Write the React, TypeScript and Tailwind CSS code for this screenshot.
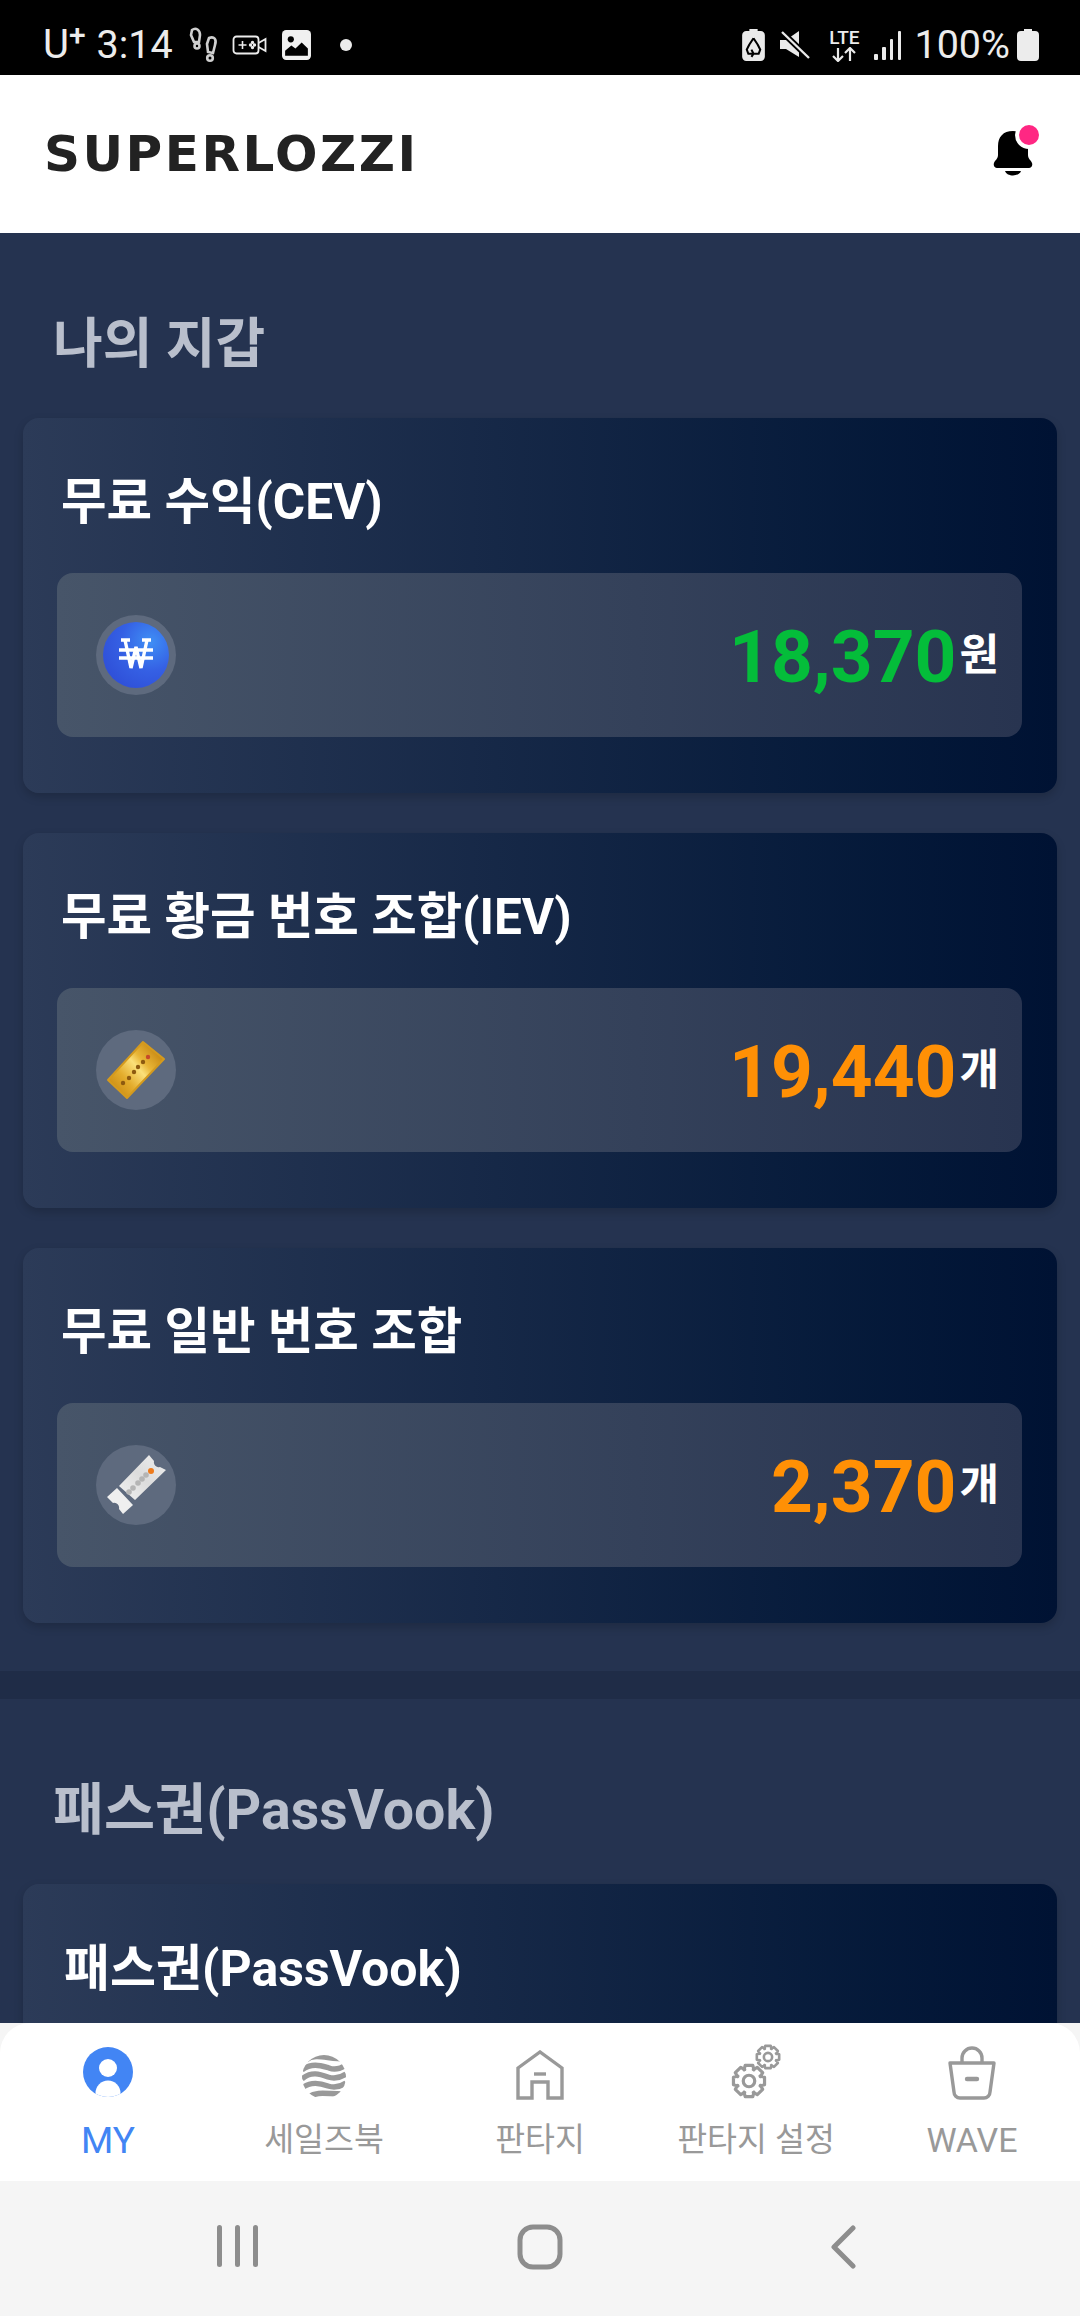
const font = "font-['Roboto','Noto_Sans_CJK_KR',sans-serif]";

function WonCoin() {
  return (
    <div className="w-[80px] h-[80px] rounded-full bg-[#5e6a7e] flex items-center justify-center">
      <svg width="66" height="66" viewBox="0 0 66 66">
        <defs>
          <radialGradient id="coin" cx="0.72" cy="0.3" r="0.8">
            <stop offset="0" stopColor="#3f8ff5" />
            <stop offset="0.55" stopColor="#3560e4" />
            <stop offset="1" stopColor="#2f50d8" />
          </radialGradient>
        </defs>
        <circle cx="33" cy="33" r="33" fill="url(#coin)" />
        <g stroke="#fff" strokeWidth="3.4" fill="none" strokeLinecap="butt" strokeLinejoin="miter">
          <path d="M22 18 L28 46 L33 25 L38 46 L44 18" />
          <path d="M16 28 H50" />
          <path d="M16 36 H50" />
          <path d="M18 18 H27 M39 18 H48" />
        </g>
      </svg>
    </div>
  );
}

function GoldTicket() {
  return (
    <div className="w-[80px] h-[80px] rounded-full bg-[#5e6a7e] flex items-center justify-center">
      <svg width="80" height="80" viewBox="0 0 80 80">
        <defs>
          <linearGradient id="gold" x1="0.1" y1="0.9" x2="0.9" y2="0.2">
            <stop offset="0" stopColor="#c98a12" />
            <stop offset="0.3" stopColor="#e3ac2c" />
            <stop offset="0.58" stopColor="#fbe07a" />
            <stop offset="0.72" stopColor="#e9b637" />
            <stop offset="1" stopColor="#c98a14" />
          </linearGradient>
        </defs>
        <path d="M12 50 L47 12 L68 29 L31 68 Z" fill="url(#gold)" stroke="#d49a1e" strokeWidth="2" strokeLinejoin="round" />
        <circle cx="27" cy="53" r="2.2" fill="#8d5a10" />
        <circle cx="33" cy="48" r="2.2" fill="#8d5a10" />
        <circle cx="38" cy="42" r="2.2" fill="#8d5a10" />
        <circle cx="42" cy="37" r="2.2" fill="#8d5a10" />
        <circle cx="47" cy="32" r="2.2" fill="#8d5a10" />
        <circle cx="52" cy="27" r="2.2" fill="#c64a2a" />
      </svg>
    </div>
  );
}

function SilverTicket() {
  return (
    <div className="w-[80px] h-[80px] rounded-full bg-[#5e6a7e] flex items-center justify-center">
      <svg width="80" height="80" viewBox="0 0 80 80">
        <defs>
          <linearGradient id="silver" x1="0" y1="1" x2="1" y2="0">
            <stop offset="0" stopColor="#f2f2f2" />
            <stop offset="0.5" stopColor="#dcdcdc" />
            <stop offset="1" stopColor="#efefef" />
          </linearGradient>
        </defs>
        <path d="M23 41 L53 10 L58 16 A5 5 0 0 0 64 22 L70 25 L39 55 Z" fill="url(#silver)" />
        <path d="M11 52 L21 43 L37 60 L27 69 L23 64 A5 5 0 0 0 17 58 Z" fill="#efefef" />
        <circle cx="33" cy="47" r="2.8" fill="#b5b5b5" />
        <circle cx="37" cy="43" r="2.8" fill="#b5b5b5" />
        <circle cx="42" cy="38" r="2.8" fill="#b5b5b5" />
        <circle cx="46" cy="34" r="2.8" fill="#b5b5b5" />
        <circle cx="50" cy="30" r="2.8" fill="#b5b5b5" />
        <circle cx="55" cy="26" r="3" fill="#ee7b1c" />
      </svg>
    </div>
  );
}

function WalletCard({
  title,
  icon,
  value,
  unit,
  valueColor,
}: {
  title: string;
  icon: React.ReactNode;
  value: string;
  unit: string;
  valueColor: string;
}) {
  return (
    <div className="h-[375px] rounded-[16px] bg-gradient-to-r from-[#2c3b58] to-[#001233] pl-[34px] pr-[35px] shadow-[0_4px_10px_rgba(0,0,0,0.18)]">
      <div className="h-[155px] flex items-center pt-[14px] pl-[4px]">
        <h3 className="text-[49.5px] font-bold text-white leading-none">{title}</h3>
      </div>
      <div className="h-[164px] rounded-[16px] bg-gradient-to-r from-[#475569] to-[#283450] flex items-center justify-between pl-[39px] pr-[23px]">
        {icon}
        <div className="flex items-center">
          <span className={`text-[73px] font-bold leading-none pt-[4px] ${valueColor}`}>{value}</span>
          <span className="text-[43px] font-bold text-white ml-[3px] leading-none">{unit}</span>
        </div>
      </div>
    </div>
  );
}

function StatusBar() {
  return (
    <div className="h-[75px] bg-black flex items-center justify-between pl-[43px] pr-[41px] pt-[14px] text-[#ececec] shrink-0">
      <div className="flex items-center">
        <span className="text-[40px] leading-none flex items-start">
          U<span className="text-[30px] font-medium leading-none -mt-[5px]">+</span>
        </span>
        <span className="text-[39.5px] leading-none ml-[11px]">3:14</span>
        <svg className="ml-[16px]" width="30" height="36" viewBox="0 0 30 36" fill="none" stroke="#cfcfcf" strokeWidth="2.6">
          <path d="M3 3 C7 0 11 3 11 8 L10 15 L5 15 L2 8 Z" />
          <circle cx="8" cy="19" r="2.5" />
          <path d="M20 11 C25 9 28 12 26 18 L24 26 L19 25 L18 17 Z" />
          <circle cx="21" cy="31" r="2.8" />
        </svg>
        <svg className="ml-[13px]" width="35" height="20" viewBox="0 0 34 20" fill="none" stroke="#ececec" strokeWidth="1.8">
          <rect x="1" y="1.5" width="25" height="17" rx="3" />
          <path d="M26 8 L33 4 V16 L26 12" />
          <path d="M6 10 H14 M10 6 V14" strokeWidth="1.6" />
          <circle cx="18" cy="10" r="0.8" />
          <circle cx="22" cy="10" r="0.8" />
          <circle cx="20" cy="7.5" r="0.8" />
          <circle cx="20" cy="12.5" r="0.8" />
        </svg>
        <svg className="ml-[15px]" width="29" height="30" viewBox="0 0 28 29">
          <rect x="0" y="0" width="28" height="29" rx="4" fill="#f0f0f0" />
          <circle cx="8.5" cy="9" r="3" fill="#000" />
          <path d="M3 25 V20 L9 15 L13 18 L19 12 L25 18 V25 Z" fill="#000" />
        </svg>
        <span className="w-[12px] h-[12px] rounded-full bg-[#ececec] ml-[29px]" />
      </div>
      <div className="flex items-center">
        <svg width="23" height="32" viewBox="0 0 22 31">
          <path d="M7 0 H15 V2 H18 A4 4 0 0 1 22 6 V27 A4 4 0 0 1 18 31 H4 A4 4 0 0 1 0 27 V6 A4 4 0 0 1 4 2 H7 Z" fill="#eaeaea" />
          <path d="M11 9 L15 15 M11 9 L7 15 M7 15 L4.5 20 L6 24 H16 L17.5 20 L15 15 M9 20 L11 24 L9 27" stroke="#000" strokeWidth="2" fill="none" />
        </svg>
        <svg className="ml-[15px]" width="30" height="30" viewBox="0 0 30 30">
          <path d="M0 10 H6 L19 1 V27 L6 19 H0 Z" fill="#eaeaea" />
          <path d="M2 2 L29 28" stroke="#000" strokeWidth="6" />
          <path d="M2 2 L29 28" stroke="#eaeaea" strokeWidth="2.4" />
        </svg>
        <div className="ml-[17px] w-[34px] flex flex-col items-center">
          <span className="text-[19px] font-medium leading-none">LTE</span>
          <svg width="26" height="15" viewBox="0 0 26 15" fill="none" stroke="#eaeaea" strokeWidth="2.2">
            <path d="M7 1 V14 M2 9 L7 14 L12 9" />
            <path d="M19 14 V1 M14 6 L19 1 L24 6" />
          </svg>
        </div>
        <svg className="ml-[13px]" width="28" height="30" viewBox="0 0 28 30" fill="#eaeaea">
          <rect x="0" y="24" width="4" height="6" rx="1" />
          <rect x="8" y="17" width="4" height="13" rx="1" />
          <rect x="16" y="9" width="3" height="21" rx="1" />
          <rect x="24" y="1" width="3" height="29" rx="1" />
        </svg>
        <span className="text-[39.5px] leading-none ml-[12px]">100%</span>
        <svg className="ml-[7px]" width="22" height="32" viewBox="0 0 22 32" fill="#ececec">
          <path d="M7 0 H15 V2 H18 A4 4 0 0 1 22 6 V28 A4 4 0 0 1 18 32 H4 A4 4 0 0 1 0 28 V6 A4 4 0 0 1 4 2 H7 Z" />
        </svg>
      </div>
    </div>
  );
}

function Header() {
  return (
    <div className="h-[158px] bg-white flex items-center justify-between pl-[44px] pr-[47px] shrink-0">
      <span className="font-['DejaVu_Sans',sans-serif] font-bold text-[50px] leading-none tracking-[2.5px] text-[#222222]">
        SUPERLOZZI
      </span>
      <div className="relative w-[40px] h-[50px] mt-[-2px]">
        <svg width="40" height="50" viewBox="0 0 40 50">
          <path d="M20 3 C30 3 35 9 35 18 V27 C35 31 38 32 39 35 C40 38 38 40 36 40 H4 C2 40 0 38 1 35 C2 32 5 31 5 27 V18 C5 9 10 3 20 3 Z" fill="#000" />
          <path d="M12 43 H28 C26 49 14 49 12 43 Z" fill="#000" />
        </svg>
        <span className="absolute right-[-10px] top-[-7px] w-[20px] h-[20px] rounded-full bg-[#ff2783] box-content border-[4px] border-white" />
      </div>
    </div>
  );
}

type NavProps = { label: string; labelSize: string; active?: boolean; children: React.ReactNode };

function NavItem({ label, labelSize, active, children }: NavProps) {
  return (
    <div className="flex flex-col items-center">
      <div className="h-[62px] w-full flex items-end justify-center">{children}</div>
      <span className={`h-[34px] flex items-center leading-none mt-[23px] ${labelSize} ${active ? "text-[#4285f4]" : "text-[#999999]"}`}>{label}</span>
    </div>
  );
}

function Gear({ cx, cy, r, sw }: { cx: number; cy: number; r: number; sw: number }) {
  const teeth = [0, 45, 90, 135, 180, 225, 270, 315];
  const o = r * 1.0;
  const i = r * 0.76;
  const points: string[] = [];
  teeth.forEach((a) => {
    const rad = (Math.PI / 180) * a;
    const w = 0.24;
    const gap = 0.42;
    [
      [i, rad - gap],
      [o, rad - w],
      [o, rad + w],
      [i, rad + gap],
    ].forEach(([d, t]) => points.push(`${cx + d * Math.cos(t)},${cy + d * Math.sin(t)}`));
  });
  return (
    <g fill="none" stroke="#999999" strokeWidth={sw} strokeLinejoin="round">
      <polygon points={points.join(" ")} />
      <circle cx={cx} cy={cy} r={r * 0.36} />
    </g>
  );
}

function BottomNav() {
  return (
    <div className="h-[158px] bg-white rounded-t-[30px] grid grid-cols-5 shrink-0 pt-[15px]">
      <NavItem label="MY" labelSize="text-[37px]" active>
        <svg width="50" height="50" viewBox="0 0 50 50" className="mb-[3px]">
          <defs>
            <clipPath id="me">
              <circle cx="25" cy="25" r="25" />
            </clipPath>
          </defs>
          <circle cx="25" cy="25" r="25" fill="#4285f4" />
          <circle cx="25" cy="21" r="9" fill="#fff" />
          <circle cx="25" cy="46" r="12.5" fill="#fff" clipPath="url(#me)" />
        </svg>
      </NavItem>
      <NavItem label="세일즈북" labelSize="text-[32.5px]">
        <svg width="44" height="46" viewBox="0 0 44 46" fill="none" stroke="#999999" strokeWidth="5.4" strokeLinecap="butt">
          <defs>
            <clipPath id="globe">
              <circle cx="22" cy="23" r="22" />
            </clipPath>
          </defs>
          <g clipPath="url(#globe)">
            <path d="M4 6 C14 -1 24 5 44 5" />
            <path d="M0 16 C10 8 20 12 27 14 C32 16 38 15 44 11" />
            <path d="M0 25 C9 17 18 20 26 23 C32 25 38 24 44 20" />
            <path d="M0 34 C9 27 18 29 26 32 C32 34 38 33 44 29" />
            <path d="M6 43 C16 37 24 40 40 40" />
          </g>
        </svg>
      </NavItem>
      <NavItem label="판타지" labelSize="text-[32.5px]">
        <svg width="48" height="50" viewBox="0 0 48 50" fill="none" stroke="#999999" strokeWidth="3.4" strokeLinejoin="miter">
          <path d="M2 48 V18 L24 2 L46 18 V48 H32 V32 H16 V48 Z" />
          <path d="M18 24 H30" />
        </svg>
      </NavItem>
      <NavItem label="판타지 설정" labelSize="text-[32.5px]">
        <svg width="50" height="56" viewBox="0 0 50 56">
          <Gear cx={18} cy={37} r={16} sw={3.2} />
          <Gear cx={37} cy={13} r={11.5} sw={2.6} />
        </svg>
      </NavItem>
      <NavItem label="WAVE" labelSize="text-[34px]">
        <svg width="48" height="54" viewBox="0 0 48 54" fill="none" stroke="#999999" strokeWidth="3.4">
          <path d="M2 17 H46 L42 46 A6 6 0 0 1 36 52 H12 A6 6 0 0 1 6 46 Z" strokeLinejoin="round" />
          <path d="M14 17 V12 A10 10 0 0 1 34 12 V17" />
          <path d="M19 33 H29" strokeWidth="4.4" strokeLinecap="round" />
        </svg>
      </NavItem>
    </div>
  );
}

function SystemNav() {
  return (
    <div className="h-[135px] bg-[#f5f5f5] flex items-center justify-center shrink-0 pb-[4px]">
      <div className="grid grid-cols-3 w-[909px] items-center justify-items-center">
        <svg width="41" height="44" viewBox="0 0 41 44" fill="#8d8d8d">
          <rect x="0" y="0" width="5" height="42" rx="2.5" />
          <rect x="18" y="0" width="5" height="42" rx="2.5" />
          <rect x="36" y="0" width="5" height="42" rx="2.5" />
        </svg>
        <svg width="46" height="46" viewBox="0 0 46 46" fill="none" stroke="#8d8d8d" strokeWidth="5">
          <rect x="3" y="3" width="40" height="40" rx="13" />
        </svg>
        <svg width="26" height="44" viewBox="0 0 26 44" fill="none" stroke="#8d8d8d" strokeWidth="5" strokeLinecap="round" strokeLinejoin="round">
          <path d="M23 3 L4 22 L23 41" />
        </svg>
      </div>
    </div>
  );
}

export default function App() {
  return (
    <div className={`w-[1080px] h-[2316px] flex flex-col overflow-hidden bg-[#f5f5f5] ${font}`}>
      <StatusBar />
      <Header />
      <main className="flex-1 min-h-0 overflow-hidden bg-[#253350]">
        <section className="px-[23px] h-[1438px]">
          <h2 className="h-[185px] flex items-center pt-[38px] pl-[30px] text-[54px] font-bold text-[#b9bfcc] leading-none">나의 지갑</h2>
          <div className="flex flex-col gap-[40px]">
            <WalletCard title="무료 수익(CEV)" icon={<WonCoin />} value="18,370" unit="원" valueColor="text-[#04bd3a]" />
            <WalletCard title="무료 황금 번호 조합(IEV)" icon={<GoldTicket />} value="19,440" unit="개" valueColor="text-[#ff9005]" />
            <WalletCard title="무료 일반 번호 조합" icon={<SilverTicket />} value="2,370" unit="개" valueColor="text-[#ff9005]" />
          </div>
        </section>
        <div className="h-[28px] bg-[#1f2c47]" />
        <section className="px-[23px]">
          <h2 className="h-[185px] flex items-center pt-[38px] pl-[30px] text-[55.5px] font-bold text-[#b9bfcc] leading-none">패스권(PassVook)</h2>
          <div className="h-[375px] rounded-[16px] bg-gradient-to-r from-[#2c3b58] to-[#001233] px-[41px] shadow-[0_4px_10px_rgba(0,0,0,0.18)]">
            <h3 className="h-[155px] pt-[14px] flex items-center text-[50px] font-bold text-white leading-none">패스권(PassVook)</h3>
          </div>
        </section>
      </main>
      <BottomNav />
      <SystemNav />
    </div>
  );
}
